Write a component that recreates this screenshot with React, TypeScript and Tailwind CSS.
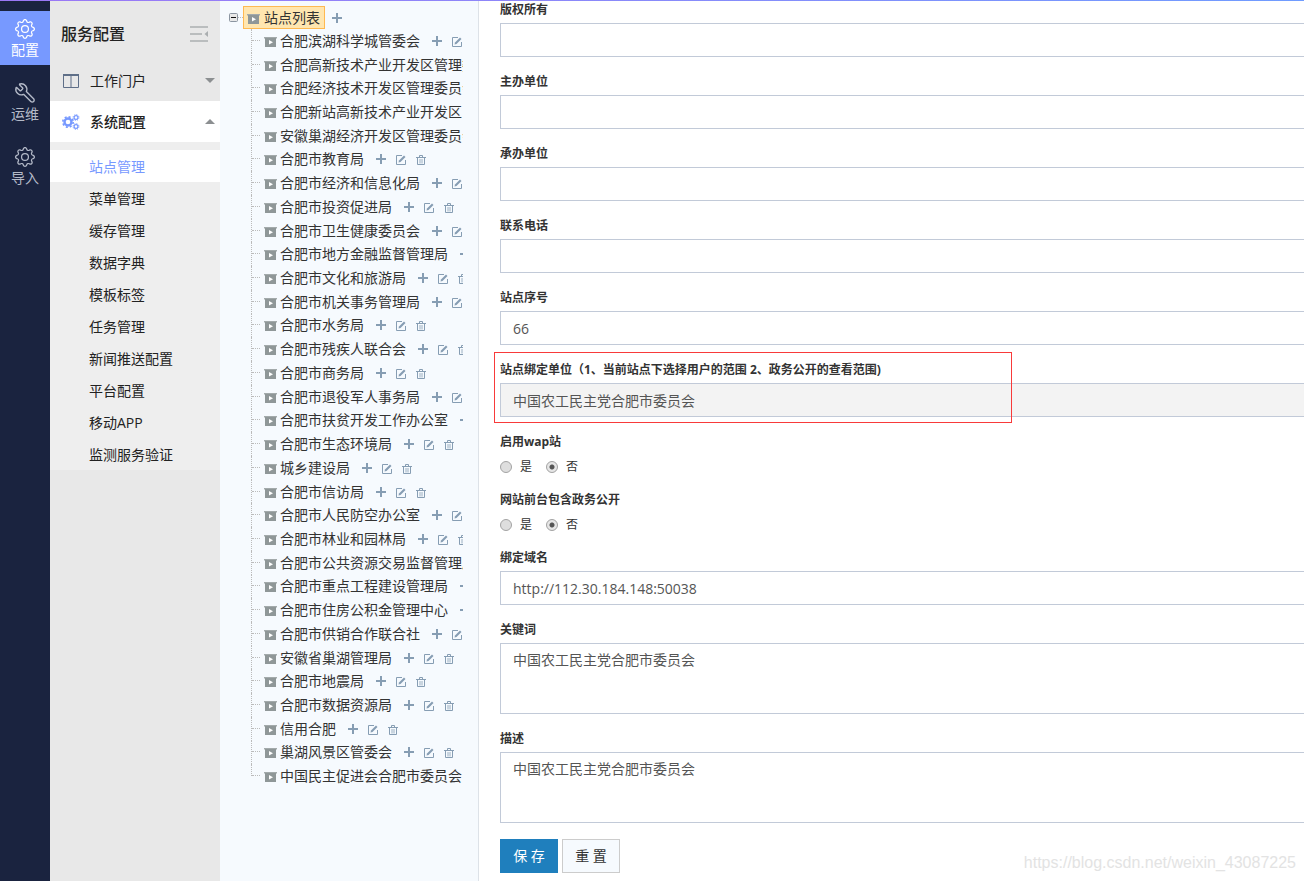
import type { ReactNode } from "react";
import { Wrench } from "lucide-react";
import { BsGear } from "react-icons/bs";

const NAV = [
  { label: "配置", icon: "setting", active: true },
  { label: "运维", icon: "tool", active: false },
  { label: "导入", icon: "setting", active: false },
];

const SUB_MENU = [
  "站点管理",
  "菜单管理",
  "缓存管理",
  "数据字典",
  "模板标签",
  "任务管理",
  "新闻推送配置",
  "平台配置",
  "移动APP",
  "监测服务验证",
];

const SITES = [
  "合肥滨湖科学城管委会",
  "合肥高新技术产业开发区管理委员会",
  "合肥经济技术开发区管理委员会",
  "合肥新站高新技术产业开发区",
  "安徽巢湖经济开发区管理委员会",
  "合肥市教育局",
  "合肥市经济和信息化局",
  "合肥市投资促进局",
  "合肥市卫生健康委员会",
  "合肥市地方金融监督管理局",
  "合肥市文化和旅游局",
  "合肥市机关事务管理局",
  "合肥市水务局",
  "合肥市残疾人联合会",
  "合肥市商务局",
  "合肥市退役军人事务局",
  "合肥市扶贫开发工作办公室",
  "合肥市生态环境局",
  "城乡建设局",
  "合肥市信访局",
  "合肥市人民防空办公室",
  "合肥市林业和园林局",
  "合肥市公共资源交易监督管理局",
  "合肥市重点工程建设管理局",
  "合肥市住房公积金管理中心",
  "合肥市供销合作联合社",
  "安徽省巢湖管理局",
  "合肥市地震局",
  "合肥市数据资源局",
  "信用合肥",
  "巢湖风景区管委会",
  "中国民主促进会合肥市委员会",
];

const SiteIcon = () => (
  <svg className="mt-0.5 shrink-0" width="13" height="10" viewBox="0 0 13 10" aria-hidden="true">
    <path d="M0 0h13v1.500H0z" fill="#a3aaab" />
    <path d="M1 1h11v9H1z" fill="#8f9798" />
    <path d="M5 3v4.500l4-2.250z" fill="#fff" />
  </svg>
);

const PlusIcon = () => (
  <svg width="10" height="10" viewBox="0 0 10 10" aria-hidden="true">
    <path d="M5 0v10M0 5h10" stroke="#869db3" strokeWidth="2" />
  </svg>
);

const EditIcon = () => (
  <svg className="mt-0.5" width="10" height="10" viewBox="0 0 10 10" fill="none" stroke="#869db3" aria-hidden="true">
    <path d="M6 .5H.5v9h9V5" />
    <path d="M2.500 7.500l.5-2L8 .5 9.500 2l-5 5z" fill="#869db3" stroke="none" />
  </svg>
);

const TrashIcon = () => (
  <svg className="mt-0.5" width="10" height="10" viewBox="0 0 10 10" fill="none" stroke="#869db3" aria-hidden="true">
    <path d="M0 2.500h10M3.500 2V.5h3V2M1.500 3v6.500h7V3" />
    <path d="M4 4v4.500M6 4v4.500" strokeWidth=".8" />
  </svg>
);

const CogsIcon = () => (
  <svg className="mr-2.5" width="18" height="16" viewBox="0 0 18 16" fill="none" stroke="#7799ff" aria-hidden="true">
    <circle cx="6" cy="8" r="3.500" strokeWidth="2.400" />
    <circle cx="6" cy="8" r="5.200" strokeWidth="1.600" strokeDasharray="2.040 2.040" />
    <circle cx="14" cy="3.500" r="1.900" strokeWidth="1.200" />
    <circle cx="14" cy="3.500" r="2.900" strokeWidth="1" strokeDasharray="1.140 1.140" />
    <circle cx="14" cy="12.500" r="1.900" strokeWidth="1.200" />
    <circle cx="14" cy="12.500" r="2.900" strokeWidth="1" strokeDasharray="1.140 1.140" />
  </svg>
);

const NavRail = () => (
  <nav className="w-[50px] shrink-0 bg-[#1a233f] pt-2.5">
    {NAV.map((item) => (
      <a
        key={item.label}
        href="#"
        className={`mb-2.5 flex h-[54px] flex-col items-center pt-[7px] text-sm leading-5 ${
          item.active ? "bg-[#7799ff] text-white" : "text-[#b4bac8]"
        }`}
      >
        <span className="flex h-[22px] items-center">
          {item.icon === "tool" ? (
            <Wrench className="-scale-x-100" size={22} strokeWidth={1.5} />
          ) : (
            <BsGear size={20} />
          )}
        </span>
        {item.label}
      </a>
    ))}
  </nav>
);

const Caret = ({ up }: { up?: boolean }) => (
  <svg className="ml-auto" width="10" height="5" viewBox="0 0 10 5" aria-hidden="true">
    <path d={up ? "M0 5l5-5 5 5z" : "M0 0l5 5 5-5z"} fill="#8c8f91" />
  </svg>
);

const SideMenu = () => (
  <aside className="w-[170px] shrink-0 bg-[#e8e8e8] text-sm text-[#222]">
    <div className="flex h-[59px] items-center justify-between pt-1.5 pr-3 pl-[11px]">
      <h1 className="text-base font-medium">服务配置</h1>
      <button type="button" aria-label="收起菜单">
        <svg width="18" height="16" viewBox="0 0 18 16" aria-hidden="true">
          <path d="M0 1h18M0 8h12M0 15h18" stroke="#aaaeb0" strokeWidth="1.500" />
          <path d="M18 5v6l-3.500-3z" fill="#aaaeb0" />
        </svg>
      </button>
    </div>
    <button type="button" className="flex h-[41px] w-full items-center pr-[5px] pl-[13px]">
      <svg className="mr-[11px]" width="16" height="14" viewBox="0 0 16 14" fill="none" aria-hidden="true">
        <path d="M.5.500h15v13H.5zM8 1v12" stroke="#5f6f88" />
        <path d="M0 1h16" stroke="#5f6f88" strokeWidth="2" />
      </svg>
      工作门户
      <Caret />
    </button>
    <button type="button" className="flex h-[41px] w-full items-center bg-white pr-[5px] pl-3 font-medium">
      <CogsIcon />
      系统配置
      <Caret up />
    </button>
    <ul className="bg-[#eee] pt-2">
      {SUB_MENU.map((label, i) => (
        <li key={label}>
          <a
            href="#"
            className={`flex h-8 items-center pt-px pl-[39px] ${i === 0 ? "bg-white text-[#7799ff]" : ""}`}
          >
            {label}
          </a>
        </li>
      ))}
    </ul>
  </aside>
);

const SiteTree = () => (
  <section className="w-[259px] shrink-0 border-r border-[#dde2e8] bg-[#f6fafe] pr-[15px] text-sm text-[#333]">
    <div className="overflow-hidden">
      <div className="flex items-center pt-[5px] pl-[9px]">
        <button type="button" aria-label="折叠">
          <svg width="9" height="9" viewBox="0 0 9 9" aria-hidden="true">
            <rect x=".5" y=".5" width="8" height="8" rx="1" fill="#e8e8e8" stroke="#8b95a1" />
            <path d="M2 4.500h5" stroke="#111" />
          </svg>
        </button>
        <span className="w-[5px] border-t border-dotted border-[#bbb]" />
        <a
          href="#"
          className="flex h-[23px] items-center gap-1 border border-[#ffb951] bg-[#ffe6b0] pr-1 pl-[3px] leading-5"
        >
          <SiteIcon />
          站点列表
        </a>
        <button type="button" aria-label="新增" className="ml-[7px]">
          <PlusIcon />
        </button>
      </div>
      <ul className="flex h-[759px] flex-col">
        {SITES.map((name) => (
          <li key={name} className="group ml-[31px] flex flex-1 items-center">
            <span className="flex h-full w-[9px] shrink-0 flex-col border-l border-dotted border-[#bbb] group-last:h-1/2 group-last:self-start">
              <span className="h-1/2 border-b border-dotted border-[#bbb] group-last:h-full" />
            </span>
            <a href="#" className="ml-1 flex shrink-0 items-center gap-[3px] whitespace-nowrap leading-5">
              <SiteIcon />
              {name}
            </a>
            <span className="ml-3 flex shrink-0 items-center gap-2.5">
              <button type="button" aria-label={`新增 ${name}`}>
                <PlusIcon />
              </button>
              <button type="button" aria-label={`编辑 ${name}`}>
                <EditIcon />
              </button>
              <button type="button" aria-label={`删除 ${name}`}>
                <TrashIcon />
              </button>
            </span>
          </li>
        ))}
      </ul>
    </div>
  </section>
);

const LABEL = "mb-1 block h-[18px] text-xs leading-[18px] font-bold text-[#333]";
const CONTROL = "block w-full border border-r-0 border-[#c2cad8] px-3 text-sm text-[#555]";

type FieldProps = { id: string; label: string; value?: string; disabled?: boolean; children?: ReactNode };

const Field = ({ id, label, value = "", disabled, children }: FieldProps) => (
  <div className="relative mb-4">
    <label htmlFor={id} className={LABEL}>
      {label}
    </label>
    <input
      id={id}
      type="text"
      defaultValue={value}
      disabled={disabled}
      className={`${CONTROL} h-[34px] disabled:bg-[#f3f3f3]`}
    />
    {children}
  </div>
);

const AreaField = ({ id, label, value }: FieldProps) => (
  <div className="mb-4">
    <label htmlFor={id} className={LABEL}>
      {label}
    </label>
    <textarea id={id} defaultValue={value} className={`${CONTROL} h-[71px] resize-none py-1.5 leading-5`} />
  </div>
);

const RadioField = ({ name, label }: { name: string; label: string }) => (
  <fieldset className="mb-3">
    <legend className={LABEL}>{label}</legend>
    <div className="flex h-6 items-center gap-3.5 text-xs text-[#333]">
      {["是", "否"].map((option) => (
        <label key={option} className="flex items-center gap-2">
          <input
            type="radio"
            name={name}
            defaultChecked={option === "否"}
            className="h-3 w-3 appearance-none rounded-full border border-[#a3a3a3] bg-[#dedede] checked:bg-[radial-gradient(circle,#555_0_2px,#e6e6e6_3px)]"
          />
          {option}
        </label>
      ))}
    </div>
  </fieldset>
);

const SiteForm = () => (
  <main className="min-w-0 flex-1 bg-white pl-[21px]">
    <form>
      <Field id="copyright" label="版权所有" />
      <Field id="host" label="主办单位" />
      <Field id="organizer" label="承办单位" />
      <Field id="phone" label="联系电话" />
      <Field id="order" label="站点序号" value="66" />
      <Field
        id="unit"
        label="站点绑定单位（1、当前站点下选择用户的范围 2、政务公开的查看范围)"
        value="中国农工民主党合肥市委员会"
        disabled
      >
        <div className="pointer-events-none absolute -top-[9px] -left-1.5 h-[71px] w-[518px] border border-[#f83a3a]" />
      </Field>
      <RadioField name="wap" label="启用wap站" />
      <RadioField name="open" label="网站前台包含政务公开" />
      <Field id="domain" label="绑定域名" value="http://112.30.184.148:50038" />
      <AreaField id="keywords" label="关键词" value="中国农工民主党合肥市委员会" />
      <AreaField id="description" label="描述" value="中国农工民主党合肥市委员会" />
      <div className="flex gap-1 text-sm">
        <button type="button" className="h-[34px] w-[58px] bg-[#1f7fbd] text-white">
          保 存
        </button>
        <button type="reset" className="h-[34px] w-[58px] border border-[#ccc] bg-[#f6fafe] text-[#333]">
          重 置
        </button>
      </div>
    </form>
  </main>
);

const App = () => (
  <div className="relative flex min-h-screen flex-col overflow-hidden font-['Open_Sans','Noto_Sans_CJK_SC',sans-serif]">
    <div className="h-px bg-linear-to-r from-[#9b77f5] to-[#6f9cff]" />
    <div className="flex flex-1">
      <NavRail />
      <SideMenu />
      <SiteTree />
      <SiteForm />
    </div>
    <p className="pointer-events-none absolute right-2 bottom-1.5 font-['Liberation_Sans',sans-serif] text-base text-[#e3e3e3]">
      https://blog.csdn.net/weixin_43087225
    </p>
  </div>
);

export default App;
